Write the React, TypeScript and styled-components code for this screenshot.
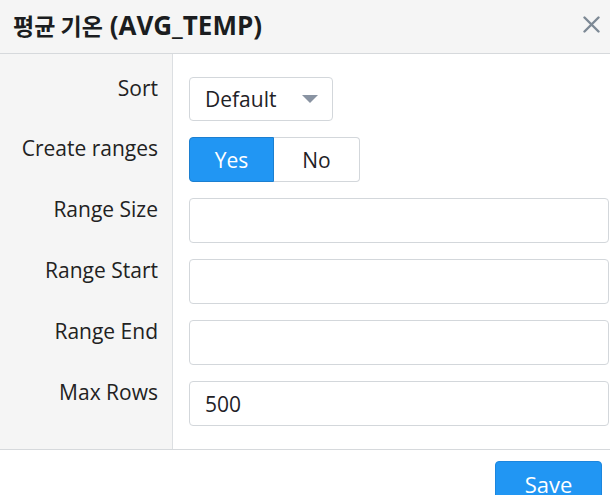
import React from "react";
import styled, { createGlobalStyle } from "styled-components";

const GlobalStyle = createGlobalStyle`
  html, body { margin: 0; padding: 0; background: #fff; overflow: hidden; }
  body { font-family: "Open Sans", "Noto Sans CJK KR", sans-serif; color: #1f2226; }
  * { box-sizing: border-box; }
`;

const Dialog = styled.div`
  width: 610px;
  height: 495px;
  display: flex;
  flex-direction: column;
  background: #fff;
`;

const Header = styled.div`
  height: 54px;
  flex: none;
  display: flex;
  align-items: center;
  justify-content: space-between;
  padding: 0 9px 4px 13px;
  background: #f5f5f5;
  border-bottom: 1px solid #d6d9dc;
`;

const Title = styled.h1`
  margin: 0;
  font-family: "Open Sans", "Noto Sans CJK KR", sans-serif;
  font-size: 26px;
  line-height: 30px;
  font-weight: 700;
  color: #1b1d20;
  white-space: nowrap;
`;

const Hangul = styled.span`
  font-family: "Noto Sans CJK KR", sans-serif;
  font-size: 23px;
`;

const CloseButton = styled.button`
  border: none;
  background: none;
  padding: 0;
  width: 19px;
  height: 19px;
  display: flex;
  align-items: center;
  justify-content: center;
  cursor: pointer;
`;

const Body = styled.div`
  flex: none;
  height: 396px;
  display: grid;
  grid-template-columns: 173px 1fr;
  grid-auto-rows: min-content;
  align-content: start;
  padding: 23px 0;
  background: linear-gradient(
    to right,
    #f5f5f5 0 172px,
    #dcdfe2 172px 173px,
    #fff 173px
  );
  border-bottom: 1px solid #d6d9dc;
`;

const Label = styled.label`
  text-align: right;
  padding: 0 15px 0 0;
  font-size: 21px;
  line-height: 22px;
  color: #222;
`;

const Field = styled.div<{ $last?: boolean }>`
  padding: 0 1px ${(p) => (p.$last ? 0 : 16)}px 16px;
  display: flex;
`;

const Select = styled.div`
  width: 144px;
  height: 44px;
  border: 1px solid #d3d7db;
  border-radius: 4px;
  display: flex;
  align-items: center;
  justify-content: space-between;
  padding: 0 14px 0 15px;
  font-size: 21px;
  color: #1f2226;
  background: #fff;
`;

const Caret = styled.span`
  width: 0;
  height: 0;
  border-left: 8px solid transparent;
  border-right: 8px solid transparent;
  border-top: 8px solid #8993a2;
`;

const Toggle = styled.div`
  display: flex;
  height: 45px;
`;

const ToggleOption = styled.button<{ $active?: boolean; $first?: boolean }>`
  width: ${(p) => (p.$first ? 85 : 86)}px;
  height: 45px;
  font-family: inherit;
  font-size: 21px;
  display: flex;
  align-items: center;
  justify-content: center;
  padding: 0;
  background: ${(p) => (p.$active ? "#2196f3" : "#fff")};
  color: ${(p) => (p.$active ? "#fff" : "#1f2226")};
  border: 1px solid ${(p) => (p.$active ? "#1c7fd0" : "#d3d7db")};
  border-left-width: ${(p) => (p.$first ? 1 : 0)}px;
  border-radius: ${(p) => (p.$first ? "4px 0 0 4px" : "0 4px 4px 0")};
`;

const Input = styled.input`
  flex: 1;
  height: 45px;
  border: 1px solid #d3d7db;
  border-radius: 4px;
  padding: 0 15px;
  font-family: inherit;
  font-size: 21px;
  color: #1f2226;
  outline: none;
`;

const Footer = styled.div`
  flex: 1;
  display: flex;
  justify-content: flex-end;
  align-items: flex-start;
  padding: 11px 8px 0 0;
`;

const SaveButton = styled.button`
  width: 107px;
  height: 44px;
  border: 1px solid #1c86de;
  border-radius: 4px;
  background: #2196f3;
  color: #fff;
  font-family: inherit;
  font-size: 22px;
  display: flex;
  justify-content: center;
  align-items: center;
  padding: 2px 0 0;
`;

const rows: { label: string; kind: "select" | "toggle" | "input"; value?: string }[] = [
  { label: "Sort", kind: "select" },
  { label: "Create ranges", kind: "toggle" },
  { label: "Range Size", kind: "input" },
  { label: "Range Start", kind: "input" },
  { label: "Range End", kind: "input" },
  { label: "Max Rows", kind: "input", value: "500" },
];

export default function App() {
  return (
    <Dialog>
      <GlobalStyle />
      <Header>
        <Title>
          <Hangul>평균 기온</Hangul> (AVG_TEMP)
        </Title>
        <CloseButton aria-label="Close">
          <svg width="17" height="17" viewBox="0 0 17 17">
            <path d="M1.5 1.5 L15.5 15.5 M15.5 1.5 L1.5 15.5" stroke="#7d8995" strokeWidth="2.4" strokeLinecap="round" />
          </svg>
        </CloseButton>
      </Header>
      <Body>
        {rows.map((r, i) => (
          <React.Fragment key={r.label}>
            <Label>{r.label}</Label>
            <Field $last={i === rows.length - 1}>
              {r.kind === "select" && (
                <Select>
                  Default
                  <Caret />
                </Select>
              )}
              {r.kind === "toggle" && (
                <Toggle>
                  <ToggleOption $first $active>Yes</ToggleOption>
                  <ToggleOption>No</ToggleOption>
                </Toggle>
              )}
              {r.kind === "input" && <Input defaultValue={r.value ?? ""} />}
            </Field>
          </React.Fragment>
        ))}
      </Body>
      <Footer>
        <SaveButton>Save</SaveButton>
      </Footer>
    </Dialog>
  );
}
